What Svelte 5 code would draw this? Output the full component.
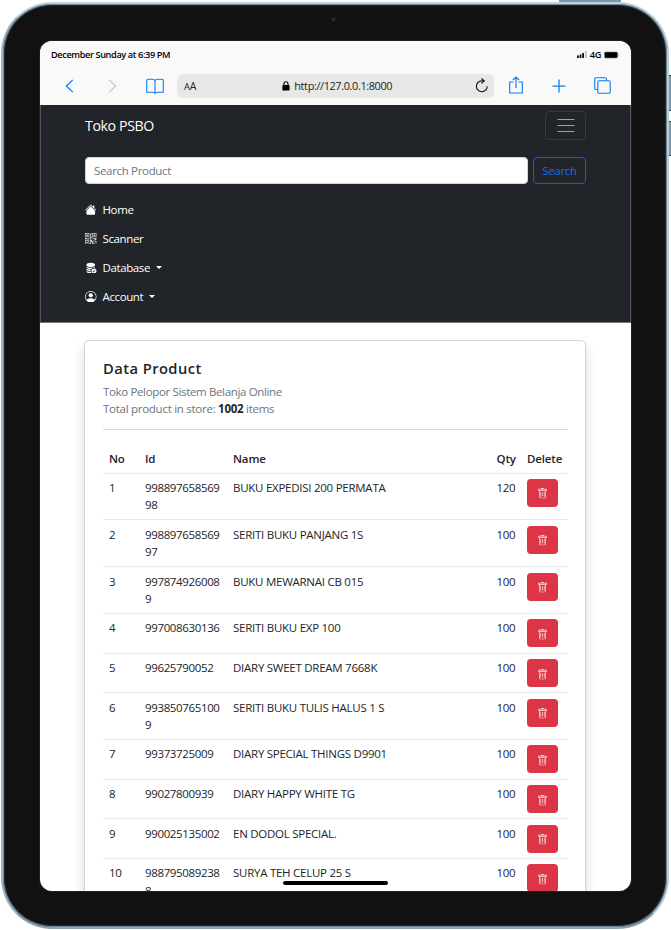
<script>
  const products = [
    ['1', '998897658569\n98', 'BUKU EXPEDISI 200 PERMATA', '120'],
    ['2', '998897658569\n97', 'SERITI BUKU PANJANG 1S', '100'],
    ['3', '997874926008\n9', 'BUKU MEWARNAI CB 015', '100'],
    ['4', '997008630136', 'SERITI BUKU EXP 100', '100'],
    ['5', '99625790052', 'DIARY SWEET DREAM 7668K', '100'],
    ['6', '993850765100\n9', 'SERITI BUKU TULIS HALUS 1 S', '100'],
    ['7', '99373725009', 'DIARY SPECIAL THINGS D9901', '100'],
    ['8', '99027800939', 'DIARY HAPPY WHITE TG', '100'],
    ['9', '990025135002', 'EN DODOL SPECIAL.', '100'],
    ['10', '988795089238\n8', 'SURYA TEH CELUP 25 S', '100']
  ];
</script>

<div class="stage">
  <i class="key top"></i><i class="key vol1"></i><i class="key vol2"></i>
  <div class="tablet">
    <i class="camera"></i>
    <div class="screen">
      <div class="chrome">
        <div class="status">
          <span>December Sunday at 6:39 PM</span>
          <div class="signal">
            <svg width="10" height="7" viewBox="0 0 10 7"><path d="M0 4.5h1.8V7H0zM2.6 3.5h1.8V7H2.6zM5.2 2H7v5H5.2z" fill="#111"/><path d="M8 0h1.6v7H8z" fill="#bbb"/></svg>
            <b>4G</b>
            <svg width="15" height="8" viewBox="0 0 15 8"><rect x=".5" y="1" width="13" height="6" rx="1.2" fill="#000" stroke="#777" stroke-width=".6"/><path d="M14.4 2.7v2.6" stroke="#999" stroke-width=".8"/></svg>
          </div>
        </div>
        <div class="tools">
          <svg class="back" width="9" height="14" viewBox="0 0 9 14"><path d="M7.8 .9 1.3 7l6.5 6.1" fill="none" stroke="#087cf5" stroke-width="1.3"/></svg>
          <svg class="next" width="9" height="14" viewBox="0 0 9 14"><path d="M1.2.9 7.7 7l-6.5 6.1" fill="none" stroke="#c4c4c4" stroke-width="1.2"/></svg>
          <svg class="book" width="18" height="16" viewBox="0 0 18 16"><path d="M9 3Q8.600 1.200 6.500 1.200H2.500Q.7 1.200.7 2.200V14.200H6.500Q8.600 14.200 9 15.400 9.400 14.200 11.500 14.200H17.300V2.200Q17.300 1.200 15.500 1.200H11.500Q9.400 1.200 9 3V15" fill="none" stroke="#087cf5" stroke-width="1.1"/></svg>
          <div class="address">
            <span class="aa"><small>A</small>A</span>
            <div class="url">
              <svg width="8" height="10" viewBox="0 0 8 10"><rect x=".4" y="4" width="7.2" height="5.6" rx=".9"/><path d="M2 4.5V2.8a2 2 0 0 1 4 0v1.7" fill="none" stroke="#000" stroke-width="1.1"/></svg>
              <span>http://127.0.0.1:8000</span>
            </div>
            <svg class="reload" width="14" height="15" viewBox="0 0 14 15"><path d="M12.2 8.2A5.4 5.4 0 1 1 6.8 2.9h2" fill="none" stroke="#111" stroke-width="1.1"/><path d="M6.4.5 9.3 2.9 6.4 5.4" fill="none" stroke="#111" stroke-width="1.1"/></svg>
          </div>
          <svg class="share" width="14" height="18" viewBox="0 0 14 18"><path d="M4.4 6H.7v11h12.6V6H9.6M7 12V1M3.900 4 7 1l3.100 3" fill="none" stroke="#087cf5" stroke-width="1.15"/></svg>
          <svg class="plus" width="14" height="14" viewBox="0 0 14 14"><path d="M7 .5v13M.5 7h13" stroke="#087cf5" stroke-width="1.25"/></svg>
          <svg class="tabs" width="17" height="17" viewBox="0 0 17 17"><path d="M3.8 12.5H2A1.3 1.3 0 0 1 .7 11.2V2A1.3 1.3 0 0 1 2 .7h9.2A1.3 1.3 0 0 1 12.5 2v1.7" fill="none" stroke="#087cf5" stroke-width="1.1"/><rect x="3.8" y="3.8" width="12.4" height="12.4" rx="1.3" fill="none" stroke="#087cf5" stroke-width="1.1"/></svg>
        </div>
      </div>

      <nav>
        <div class="brandrow">
          <span class="brand">Toko PSBO</span>
          <button class="burger" aria-label="Menu"><svg width="18" height="16" viewBox="0 0 18 16"><path d="M.5 1.500h17M.5 7.500h17M.5 13.500h17" stroke="#a0a2a4" stroke-width="1.2"/></svg></button>
        </div>
        <div class="search"><div class="field">Search Product</div><button>Search</button></div>
        <div class="link">
          <svg viewBox="0 0 16 16"><path d="M8.707 1.5a1 1 0 0 0-1.414 0L.646 8.146a.5.5 0 0 0 .708.708L8 2.207l6.646 6.647a.5.5 0 0 0 .708-.708L13 5.793V2.5a.5.5 0 0 0-.5-.5h-1a.5.5 0 0 0-.5.5v1.293z"/><path d="m8 3.293 6 6V13.500a1.500 1.500 0 0 1-1.500 1.500h-9A1.500 1.500 0 0 1 2 13.500V9.293z"/></svg>
          <span>Home</span>
        </div>
        <div class="link">
          <svg class="qr" viewBox="0 0 16 16"><path d="M2 2h2v2H2zM2 12h2v2H2zM12 2h2v2h-2z"/><path fill-rule="evenodd" d="M0 0h6v6H0zm1 1v4h4V1zM10 0h6v6h-6zm1 1v4h4V1zM0 10h6v6H0zm1 1v4h4v-4z"/><path d="M8 0h1v2H8v2H7V1h1zM7 5h1V4h1v4H7zM0 7h3v1h2V7h1v2H4v0H2v-1H1v1H0zM10 7h2v1h-2zM13 7h3v2h-1v1h-2V9h1V8h-1zM7 9h2v1h1v1h2v1h-1v2h2v1h-3v-2H8v3H7v-4h1v-1H7zM12 9h1v2h-1zM14 11h2v3h-1v-2h-1zM13 13h1v1h-1zM14 15h2v1h-2zM9 15h3v1H9z"/></svg>
          <span>Scanner</span>
        </div>
        <div class="link">
          <svg viewBox="0 0 16 16"><path d="M12.500 16a3.500 3.500 0 1 0 0-7 3.500 3.500 0 0 0 0 7m1.679-4.493-1.335 2.226a.75.75 0 0 1-1.174.144l-.774-.773a.5.5 0 0 1 .708-.708l.547.548 1.170-1.951a.5.5 0 1 1 .858.514M8 1c-1.573 0-3.022.289-4.096.777C2.875 2.245 2 2.993 2 4s.875 1.755 1.904 2.223C4.978 6.711 6.427 7 8 7s3.022-.289 4.096-.777C13.125 5.755 14 5.007 14 4s-.875-1.755-1.904-2.223C11.022 1.289 9.573 1 8 1"/><path d="M2 7v-.839c.457.432 1.004.751 1.490.972C4.722 7.693 6.318 8 8 8s3.278-.307 4.510-.867c.486-.220 1.033-.540 1.490-.972V7c0 .424-.155.802-.411 1.133a4.500 4.500 0 0 0-4.815 1.843A12 12 0 0 1 8 10c-1.573 0-3.022-.289-4.096-.777C2.875 8.755 2 8.007 2 7m6.257 3.998L8 11c-1.682 0-3.278-.307-4.510-.867-.486-.220-1.033-.540-1.490-.972V10c0 1.007.875 1.755 1.904 2.223C4.978 12.711 6.427 13 8 13h.027a4.550 4.550 0 0 1 .230-2.002m-.002 3L8 14c-1.682 0-3.278-.307-4.510-.867-.486-.220-1.033-.540-1.490-.972V13c0 1.007.875 1.755 1.904 2.223C4.978 15.711 6.427 16 8 16c.536 0 1.058-.034 1.555-.097a4.500 4.500 0 0 1-1.300-1.905"/></svg>
          <span>Database</span><i class="caret"></i>
        </div>
        <div class="link">
          <svg viewBox="0 0 16 16"><path d="M11 6a3 3 0 1 1-6 0 3 3 0 0 1 6 0"/><path fill-rule="evenodd" d="M0 8a8 8 0 1 1 16 0A8 8 0 0 1 0 8m8-7a7 7 0 0 0-5.468 11.370C3.242 11.226 4.805 10 8 10s4.757 1.225 5.468 2.370A7 7 0 0 0 8 1"/></svg>
          <span>Account</span><i class="caret"></i>
        </div>
      </nav>

      <main>
        <section class="card">
          <h5>Data Product</h5>
          <p class="l1">Toko Pelopor Sistem Belanja Online</p>
          <p class="l2">Total product in store: <b>1002</b> items</p>
          <hr />
          <div class="row head"><span>No</span><span>Id</span><span>Name</span><span>Qty</span><span>Delete</span></div>
          {#each products as [no, id, name, qty]}
            <div class="row" class:tall={id.includes('\n')}>
              <span class="num">{no}</span><span class="num">{id}</span><span class="name">{name}</span><span class="num">{qty}</span>
              <span><button class="del" aria-label="Delete"><svg width="11" height="11" viewBox="0 0 16 16"><path d="M5.500 5.500A.5.5 0 0 1 6 6v6a.5.5 0 0 1-1 0V6a.5.5 0 0 1 .5-.5m2.500 0a.5.5 0 0 1 .5.5v6a.5.5 0 0 1-1 0V6a.5.5 0 0 1 .5-.5m3 .5a.5.5 0 0 0-1 0v6a.5.5 0 0 0 1 0z"/><path d="M14.500 3a1 1 0 0 1-1 1H13v9a2 2 0 0 1-2 2H5a2 2 0 0 1-2-2V4h-.5a1 1 0 0 1-1-1V2a1 1 0 0 1 1-1H6a1 1 0 0 1 1-1h2a1 1 0 0 1 1 1h3.500a1 1 0 0 1 1 1zM4.118 4 4 4.059V13a1 1 0 0 0 1 1h6a1 1 0 0 0 1-1V4.059L11.882 4zM2.500 3h11V2h-11z"/></svg></button></span>
            </div>
          {/each}
        </section>
      </main>
      <i class="homebar"></i>
    </div>
  </div>
</div>

<style>
  :global(body) { background: #fff; }
  * { box-sizing: border-box; }
  button { padding: 0; font: inherit; }
  svg { display: block; flex: none; }
  .stage { position: relative; width: 671px; height: 930px; overflow: hidden; padding: 2px 2px 1px 1px; font-family: "Open Sans", "Noto Sans", sans-serif; font-size: 11.500px; color: #212529; }
  .key { position: absolute; background: #8095a5; }
  .top { left: 559px; top: 0; width: 62px; height: 3px; }
  .vol1, .vol2 { left: 669px; width: 3px; border-top: 1px solid #34404c; border-bottom: 1px solid #34404c; }
  .vol1 { top: 75px; height: 36px; }
  .vol2 { top: 121px; height: 35px; }
  .tablet { position: relative; height: 927px; border-radius: 51px; background: #111; border: 2px solid; border-color: #b9d3e1 #b5cfdd #8fa3b1 #a0b7c6; box-shadow: inset 0 0 0 1px #718696, inset 0 0 1px 2px #252b30; padding: 37px 36px 36px 37px; }
  .camera { position: absolute; left: 328px; top: 13px; width: 5px; height: 5px; border-radius: 50%; background: #15304c; border: 1px solid #16202c; }
  .screen { position: relative; width: 590.500px; height: 849.500px; border-radius: 12px; overflow: hidden; background: #fff; display: flex; flex-direction: column; box-shadow: 0 0 0 1px #222021; }
  .chrome { height: 64px; background: #f9f9f9; flex: none; }
  .status { height: 27px; display: flex; justify-content: space-between; align-items: center; padding: 0 11.500px 0 11px; font-size: 9.200px; font-weight: 600; color: #000; letter-spacing: -.39px; }
  .signal { display: flex; align-items: center; gap: 3px; }
  .signal b { font-weight: 600; color: #000; }
  .tools { height: 35px; display: flex; align-items: center; padding-left: 25px; }
  .next { margin-left: 34px; }
  .book { margin-left: 29px; }
  .address { margin-left: 13px; width: 317px; height: 24px; border-radius: 6px; background: #e7e7e7; display: flex; align-items: center; justify-content: space-between; padding: 0 5px 0 7px; color: #222; }
  .aa { font-size: 10.5px; letter-spacing: -.2px; width: 20px; }
  .aa small { font-size: 9.300px; }
  .url { display: flex; align-items: center; gap: 4px; font-size: 10.900px; letter-spacing: -.37px; margin-right: 4.500px; }
  .share { margin-left: 15px; margin-top: -1px; }
  .plus { margin-left: 29px; }
  .tabs { margin-left: 28px; }
  nav { height: 218px; flex: none; background: #212529; padding: 5px 43.500px 0 44px; color: #fff; border: 1px solid #505458; border-top: 0; border-bottom-color: #7b7e81; }
  .brandrow { display: flex; justify-content: space-between; align-items: center; height: 31px; }
  .brand { font-size: 14.200px; letter-spacing: -.4px; }
  .burger { width: 41px; height: 29px; border: 1px solid #373b3f; border-radius: 4px; background: none; display: flex; align-items: center; justify-content: center; }
  .search { display: flex; gap: 5.500px; margin: 16px 0 11px; height: 27px; }
  .field { flex: 1; background: #fff; border: 1px solid #ced4da; border-radius: 4px; color: #6c757d; padding-left: 8px; line-height: 26px; letter-spacing: -.33px; }
  .search button { width: 53px; border: 1px solid #0d5ed2; border-radius: 4px; background: none; color: #0d6efd; letter-spacing: -.3px; }
  .link { display: flex; align-items: center; height: 29px; letter-spacing: -.38px; font-weight: 500; }
  .link svg { width: 11.5px; height: 11.500px; fill: #fff; margin-right: 6px; }
  .link .qr { fill: #d6d7d8; }
  .caret { border: 3px solid transparent; border-top-color: #fff; border-bottom: 0; margin-left: 6px; }
  main { padding: 17px 44px 0; flex: 1; min-height: 0; }
  .card { width: 502px; height: 560px; border: 1px solid #d4d5d6; border-radius: 5px; padding: 18px 17px 0 18px; box-shadow: 0 6px 12px rgba(0,0,0,.15); background: #fff; }
  h5 { margin: 0; font-size: 14.700px; line-height: 18px; font-weight: 550; letter-spacing: .45px; }
  p { margin: 0; color: #6c757d; line-height: 17.300px; letter-spacing: -.35px; white-space: nowrap; }
  .l1 { margin-top: 6px; }
  .l2 { letter-spacing: -.27px; }
  b { color: #212529; font-weight: 700; }
  hr { margin: 11px 0 14.700px; border: 0; height: 1px; background: #d9dadb; }
  .row { display: grid; grid-template-columns: 36px 88px 264px 30px 47px; height: 39.650px; border-bottom: 1px solid #e9eaec; line-height: 17.300px; padding-top: 5.400px; }
  .row.tall { height: 46.800px; }
  .row span { padding-left: 6px; white-space: pre; }
  .row span:nth-child(4) { padding-left: 5.500px; }
  .head { height: 29.300px; font-weight: 600; letter-spacing: -.15px; }
  .num { letter-spacing: -.36px; }
  .name { letter-spacing: -.26px; }
  .del { width: 31px; height: 28px; border: 0; border-radius: 4px; background: #dc3545; display: flex; align-items: center; justify-content: center; padding-top: 2px; }
  .del svg { fill: #fbdfe2; }
  .homebar { position: absolute; left: 242.500px; bottom: 5.500px; width: 105px; height: 4px; border-radius: 2px; background: #000; }
</style>
